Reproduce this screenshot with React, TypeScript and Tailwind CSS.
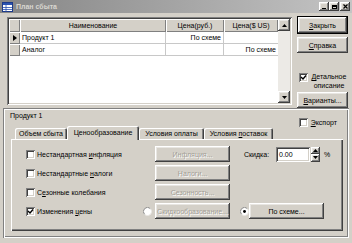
const raised =
  "bg-[#d4d0c8] shadow-[inset_-1px_-1px_#404040,inset_1px_1px_#ffffff,inset_-2px_-2px_#808080,inset_2px_2px_#e8e6e2]";
const sunken =
  "shadow-[inset_1px_1px_#808080,inset_-1px_-1px_#ffffff,inset_2px_2px_#404040,inset_-2px_-2px_#d4d0c8]";
const thinRaised = "bg-[#d4d0c8] shadow-[inset_1px_1px_#ffffff,inset_-1px_-1px_#808080]";

function Check({ checked }: { checked?: boolean }) {
  return (
    <span className={`flex w-[9px] h-[9px] shrink-0 items-center justify-center bg-white ${sunken}`}>
      {checked && (
        <svg width="7" height="7" viewBox="0 0 7 7">
          <path d="M1 3 L3 5 L6 1.5" stroke="#000" strokeWidth="1.4" fill="none" />
        </svg>
      )}
    </span>
  );
}

function Radio({ checked }: { checked?: boolean }) {
  return (
    <svg width="9" height="9" viewBox="0 0 10 10" className="shrink-0">
      <circle cx="5" cy="5" r="4.5" fill="#fff" />
      <path d="M8.2 1.8 A4.5 4.5 0 0 0 1.8 8.2" stroke="#808080" strokeWidth="1" fill="none" />
      <path d="M1.8 8.2 A4.5 4.5 0 0 0 8.2 1.8" stroke="#e8e6e2" strokeWidth="1" fill="none" />
      {checked && <circle cx="5" cy="5" r="1.6" fill="#000" />}
    </svg>
  );
}

function Btn({
  children,
  disabled,
  w,
  className = "",
}: {
  children: React.ReactNode;
  disabled?: boolean;
  w: string;
  className?: string;
}) {
  return (
    <div
      className={`${raised} ${w} h-[16px] flex items-center justify-center shrink-0 ${
        disabled ? "text-[#a29e96] [text-shadow:1px_1px_0_#ffffff]" : ""
      } ${className}`}
    >
      {children}
    </div>
  );
}

function TitleBar() {
  return (
    <div className="h-[13px] flex items-center bg-linear-to-r from-[#868686] to-[#c4c4c4]">
      <svg width="11" height="10" viewBox="0 0 11 10" className="ml-[2px]">
        <rect x="0.5" y="0.5" width="10" height="9" fill="#fff" stroke="#1c3a8a" />
        <rect x="1" y="1" width="9" height="2" fill="#2a52b0" />
        <path d="M1 5.5 H10 M1 7.5 H10 M4 3 V9.5" stroke="#2a52b0" strokeWidth="0.8" />
      </svg>
      <span className="ml-[3px] font-bold text-[#d8d6d0]">План сбыта</span>
      <div className="ml-auto mr-[2px] flex items-center">
        <div className={`${raised} w-[10px] h-[9px] flex items-end justify-center pb-[2px]`}>
          <div className="w-[4px] h-[1px] bg-black" />
        </div>
        <div className={`${raised} w-[10px] h-[9px] flex items-center justify-center`}>
          <div className="w-[5px] h-[4px] border border-black border-t-2" />
        </div>
        <div className={`${raised} ml-[1px] w-[10px] h-[9px] flex items-center justify-center`}>
          <svg width="5" height="5" viewBox="0 0 5 5">
            <path d="M0.5 0.5 L4.5 4.5 M4.5 0.5 L0.5 4.5" stroke="#000" strokeWidth="1.2" />
          </svg>
        </div>
      </div>
    </div>
  );
}

function Grid() {
  return (
    <div className={`ml-[7px] mt-[4px] w-[285px] h-[88px] bg-white p-[2px] ${sunken}`}>
      <div className="flex h-full">
        <div className="w-[269px] flex flex-col">
          <div className="flex h-[13px]">
            <div className={`w-[11px] ${thinRaised}`} />
            <div className={`w-[146px] ${thinRaised} flex items-center justify-center`}>Наименование</div>
            <div className={`w-[58px] ${thinRaised} flex items-center justify-center`}>Цена(руб.)</div>
            <div className={`w-[54px] ${thinRaised} flex items-center justify-center`}>Цена($ US)</div>
          </div>
          <div className="flex h-[12px]">
            <div className={`w-[11px] ${thinRaised} flex items-center justify-center`}>
              <svg width="4" height="6" viewBox="0 0 4 6">
                <path d="M0 0 L4 3 L0 6 Z" fill="#000" />
              </svg>
            </div>
            <div className="w-[146px] border-r border-b border-[#c8c8c8] flex items-center pl-[2px]">Продукт 1</div>
            <div className="w-[58px] border-r border-b border-[#c8c8c8] flex items-center justify-end pr-[2px]">По схеме</div>
            <div className="w-[54px] border-b border-[#c8c8c8]" />
          </div>
          <div className="flex h-[12px]">
            <div className={`w-[11px] ${thinRaised}`} />
            <div className="w-[146px] border-r border-b border-[#c8c8c8] flex items-center pl-[2px]">Аналог</div>
            <div className="w-[58px] border-r border-b border-[#c8c8c8]" />
            <div className="w-[54px] border-b border-[#c8c8c8] flex items-center justify-end pr-[2px]">По схеме</div>
          </div>
        </div>
        <div className="w-[12px] flex flex-col bg-[#eceae6]">
          <div className={`${raised} h-[12px] flex items-center justify-center`}>
            <svg width="5" height="3" viewBox="0 0 5 3">
              <path d="M0 3 L2.5 0 L5 3 Z" fill="#000" />
            </svg>
          </div>
          <div className="flex-1" />
          <div className={`${raised} h-[12px] flex items-center justify-center`}>
            <svg width="5" height="3" viewBox="0 0 5 3">
              <path d="M0 0 L2.5 3 L5 0 Z" fill="#000" />
            </svg>
          </div>
        </div>
      </div>
    </div>
  );
}

function SidePanel() {
  return (
    <div className="ml-[5px] mt-[3px] w-[51px] flex flex-col">
      <div className="border border-black">
        <Btn w="w-full" className="h-[14px]">
          <span>
            <span className="underline">З</span>акрыть
          </span>
        </Btn>
      </div>
      <Btn w="w-full" className="mt-[3px]">
        <span>
          <span className="underline">С</span>правка
        </span>
      </Btn>
      <div className="mt-[19px] h-[20px] flex items-start">
        <div className="ml-[2px] mt-[1px]">
          <Check checked />
        </div>
        <div className="ml-[2px] flex-1 text-center leading-[9px]">
          <span className="underline">Д</span>етальное
          <br />
          описание
        </div>
      </div>
      <Btn w="w-full" className="mt-[1px] h-[15px]">
        <span>
          <span className="underline">В</span>арианты...
        </span>
      </Btn>
    </div>
  );
}

function Tabs() {
  const inactive =
    "bg-[#d4d0c8] h-[11px] flex items-center justify-center rounded-t-[2px] shadow-[inset_1px_1px_#ffffff,inset_-1px_0_#404040,inset_-2px_0_#808080]";
  return (
    <div className="flex items-end h-[13px] ml-[4px]">
      <div className={`${inactive} w-[52px]`}>Объем сбыта</div>
      <div className="relative z-10 -mb-[1px] w-[72px] h-[14px] bg-[#d4d0c8] flex items-center justify-center pb-[1px] rounded-t-[2px] shadow-[inset_1px_1px_#ffffff,inset_-1px_0_#404040,inset_-2px_0_#808080]">
        Ценообразование
      </div>
      <div className={`${inactive} w-[65px]`}>Условия оплаты</div>
      <div className={`${inactive} w-[69px]`}>
        <span>
          Условия <span className="underline">п</span>оставок
        </span>
      </div>
    </div>
  );
}

function CheckRow({ label, checked }: { label: React.ReactNode; checked?: boolean }) {
  return (
    <div className="w-[117px] flex items-center">
      <Check checked={checked} />
      <span className="ml-[2px]">{label}</span>
    </div>
  );
}

function PricingPage() {
  return (
    <div className="w-[332px] h-[92px] pt-[7px] pl-[15px] shadow-[inset_1px_1px_#ffffff,inset_-1px_-1px_#404040,inset_-2px_-2px_#808080]">
      <div className="flex flex-col gap-[3px]">
        <div className="flex items-center h-[16px]">
          <CheckRow
            label={
              <>
                Нестандартная <span className="underline">и</span>нфляция
              </>
            }
          />
          <div className="w-[12px]" />
          <Btn w="w-[75px]" disabled>
            Инфляция...
          </Btn>
          <div className="w-[10px]" />
          <span className="w-[36px] pl-[4px]">Скидка:</span>
          <div className={`w-[34px] h-[15px] bg-white flex items-center pl-[3px] ${sunken}`}>0.00</div>
          <div className="ml-[1px] w-[9px] h-[15px] flex flex-col">
            <div className={`${raised} h-[7px] flex items-center justify-center`}>
              <svg width="5" height="3" viewBox="0 0 5 3">
                <path d="M0 3 L2.5 0 L5 3 Z" fill="#000" />
              </svg>
            </div>
            <div className={`${raised} h-[8px] flex items-center justify-center`}>
              <svg width="5" height="3" viewBox="0 0 5 3">
                <path d="M0 0 L2.5 3 L5 0 Z" fill="#000" />
              </svg>
            </div>
          </div>
          <span className="ml-[4px]">%</span>
        </div>
        <div className="flex items-center h-[16px]">
          <CheckRow
            label={
              <>
                Нестандартные <span className="underline">н</span>алоги
              </>
            }
          />
          <div className="w-[12px]" />
          <Btn w="w-[75px]" disabled>
            Налоги...
          </Btn>
        </div>
        <div className="flex items-center h-[16px]">
          <CheckRow
            label={
              <>
                С<span className="underline">е</span>зонные колебания
              </>
            }
          />
          <div className="w-[12px]" />
          <Btn w="w-[75px]" disabled>
            Сезонность...
          </Btn>
        </div>
        <div className="flex items-center h-[16px]">
          <CheckRow
            checked
            label={
              <>
                Изменения <span className="underline">ц</span>ены
              </>
            }
          />
          <div className="w-[12px] flex items-center">
            <Radio />
          </div>
          <Btn w="w-[75px]" disabled>
            Скидкообразование...
          </Btn>
          <div className="w-[19px] pl-[10px] flex items-center">
            <Radio checked />
          </div>
          <Btn w="w-[75px]">По схеме...</Btn>
        </div>
      </div>
    </div>
  );
}

function ProductPanel() {
  return (
    <div className="ml-[3px] w-[346px] h-[130px] px-[8px] shadow-[inset_1px_1px_#808080,inset_2px_2px_#ffffff,inset_-1px_-1px_#ffffff,inset_-2px_-2px_#808080]">
      <div className="flex h-[18px] items-start">
        <span className="mt-[4px] ml-[-1px]">Продукт 1</span>
        <div className="ml-auto mr-[4px] mt-[10px] flex items-center">
          <Check />
          <span className="ml-[3px]">
            <span className="underline">Э</span>кспорт
          </span>
        </div>
      </div>
      <Tabs />
      <PricingPage />
    </div>
  );
}

export default function App() {
  return (
    <div className="w-[352px] h-[243px] overflow-hidden bg-[#d4d0c8] font-['Liberation_Sans',Arial,sans-serif] text-[7px] leading-none text-black">
      <TitleBar />
      <div className="flex h-[95px]">
        <Grid />
        <SidePanel />
      </div>
      <ProductPanel />
    </div>
  );
}
